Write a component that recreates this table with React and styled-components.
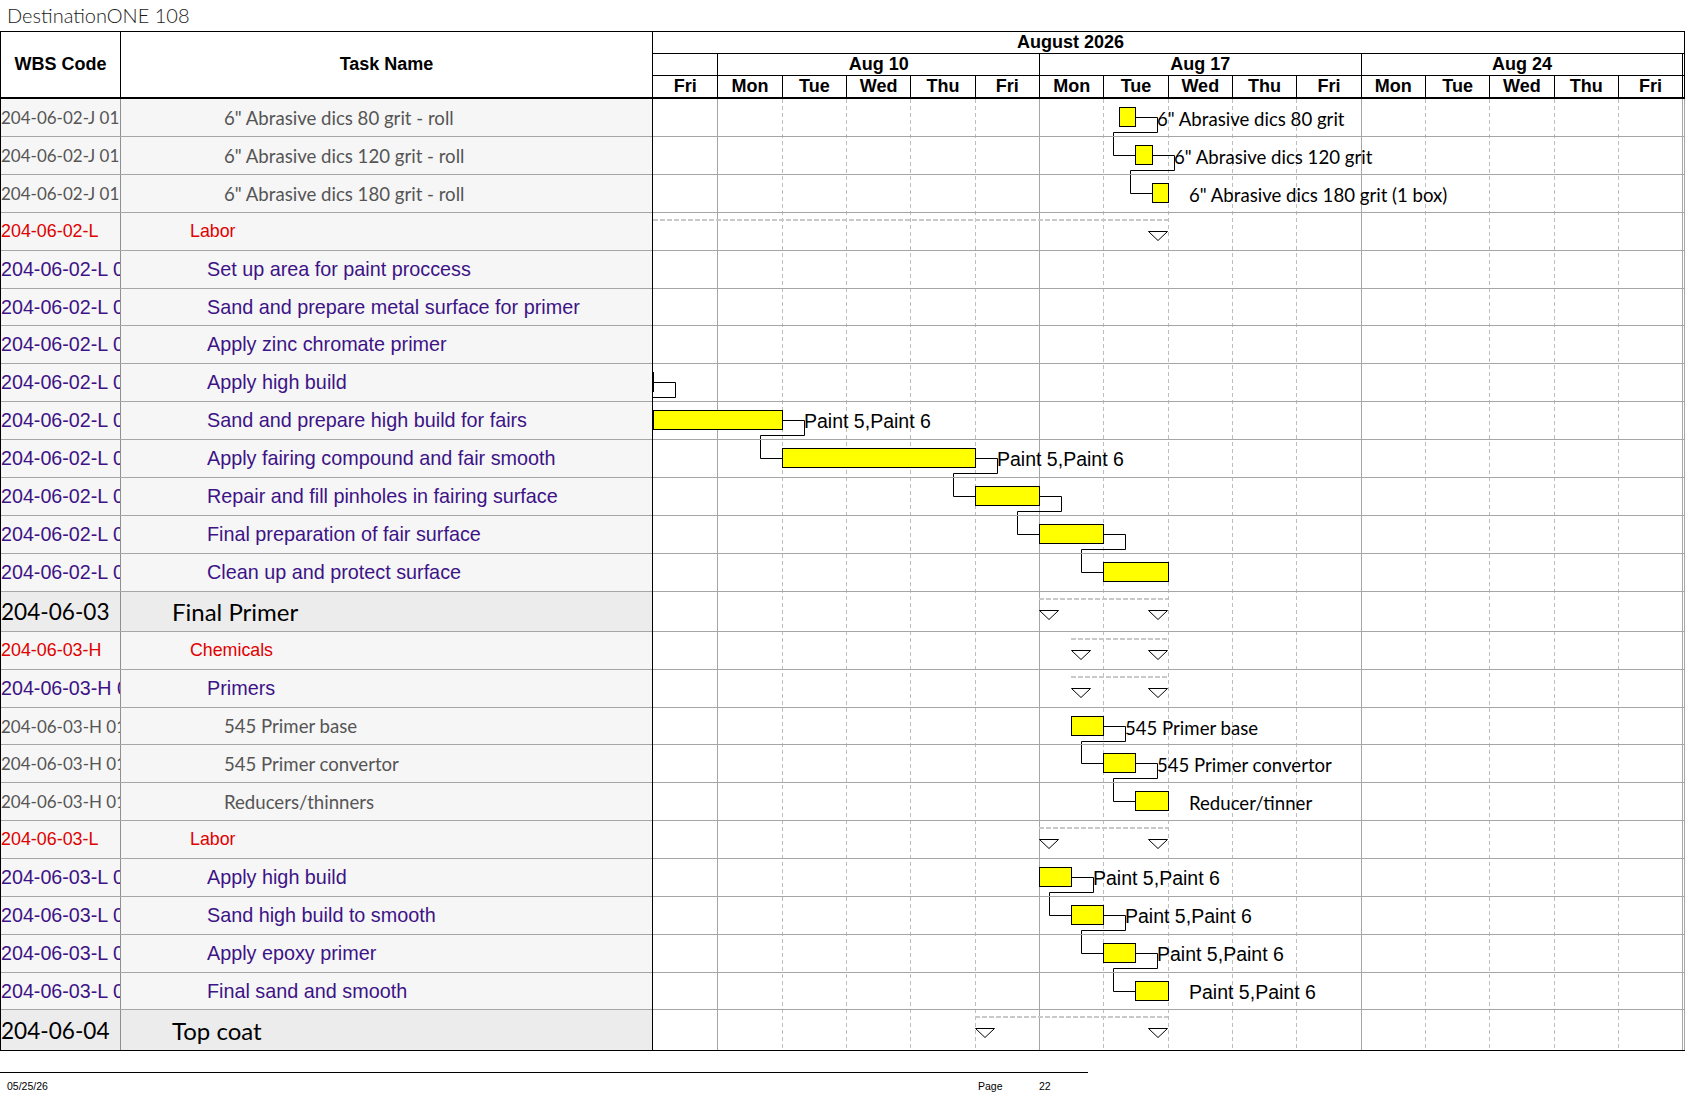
import React from 'react';
import styled, { createGlobalStyle } from 'styled-components';

const DAY = 64.33;
const NDAYS = 16;
const ARIAL = '"Liberation Sans", Arial, Helvetica, sans-serif';
const HUMAN = 'Lato, "Open Sans", "Noto Sans", sans-serif';

const GlobalStyle = createGlobalStyle`
  html, body { margin: 0; padding: 0; background: #ffffff; }
  body { font-family: ${ARIAL}; color: #000; }
  * { box-sizing: border-box; }
`;

const KINDS = {
  item: { color: '#555555', wbsFont: HUMAN, wbsSize: 17, nameFont: HUMAN, nameSize: 18.6, indent: 103, bg: '#f6f6f6', labelFont: HUMAN, labelSize: 18.6, labelTop: 9.5 },
  group: { color: '#e00000', wbsFont: ARIAL, wbsSize: 17.9, nameFont: ARIAL, nameSize: 17.8, indent: 69, bg: '#f6f6f6' },
  task: { color: '#3d1386', wbsFont: ARIAL, wbsSize: 19.7, nameFont: ARIAL, nameSize: 19.8, indent: 86, bg: '#f6f6f6', labelFont: ARIAL, labelSize: 19.5, labelTop: 8.5 },
  phase: { color: '#000000', wbsFont: HUMAN, wbsSize: 22.6, nameFont: HUMAN, nameSize: 24, indent: 51, bg: '#ececec' },
};

const P = 'Paint 5,Paint 6';
const ROWS = [
  { wbs: '204-06-02-J 01', name: '6" Abrasive dics 80 grit - roll', kind: 'item', h: 38, bar: [7.25, 7.5], label: '6" Abrasive dics 80 grit', link: true },
  { wbs: '204-06-02-J 01', name: '6" Abrasive dics 120 grit - roll', kind: 'item', h: 38, bar: [7.5, 7.75], label: '6" Abrasive dics 120 grit', link: true },
  { wbs: '204-06-02-J 01', name: '6" Abrasive dics 180 grit - roll', kind: 'item', h: 38, bar: [7.75, 8], label: '6" Abrasive dics 180 grit (1 box)' },
  { wbs: '204-06-02-L', name: 'Labor', kind: 'group', h: 38, summary: [-4, 8] },
  { wbs: '204-06-02-L 01', name: 'Set up area for paint proccess', kind: 'task', h: 38 },
  { wbs: '204-06-02-L 02', name: 'Sand and prepare metal surface for primer', kind: 'task', h: 37 },
  { wbs: '204-06-02-L 03', name: 'Apply zinc chromate primer', kind: 'task', h: 38 },
  { wbs: '204-06-02-L 04', name: 'Apply high build', kind: 'task', h: 38, bar: [-1, 0], link: true },
  { wbs: '204-06-02-L 05', name: 'Sand and prepare high build for fairs', kind: 'task', h: 38, bar: [0, 2], label: P, link: true },
  { wbs: '204-06-02-L 06', name: 'Apply fairing compound and fair smooth', kind: 'task', h: 38, bar: [2, 5], label: P, link: true },
  { wbs: '204-06-02-L 07', name: 'Repair and fill pinholes in fairing surface', kind: 'task', h: 38, bar: [5, 6], link: true },
  { wbs: '204-06-02-L 08', name: 'Final preparation of fair surface', kind: 'task', h: 38, bar: [6, 7], link: true },
  { wbs: '204-06-02-L 09', name: 'Clean up and protect surface', kind: 'task', h: 38, bar: [7, 8] },
  { wbs: '204-06-03', name: 'Final Primer', kind: 'phase', h: 40, summary: [6, 8] },
  { wbs: '204-06-03-H', name: 'Chemicals', kind: 'group', h: 38, summary: [6.5, 8] },
  { wbs: '204-06-03-H 01', name: 'Primers', kind: 'task', h: 38, summary: [6.5, 8] },
  { wbs: '204-06-03-H 01', name: '545 Primer base', kind: 'item', h: 37, bar: [6.5, 7], label: '545 Primer base', link: true },
  { wbs: '204-06-03-H 01', name: '545 Primer convertor', kind: 'item', h: 38, bar: [7, 7.5], label: '545 Primer convertor', link: true },
  { wbs: '204-06-03-H 01', name: 'Reducers/thinners', kind: 'item', h: 38, bar: [7.5, 8], label: 'Reducer/tinner' },
  { wbs: '204-06-03-L', name: 'Labor', kind: 'group', h: 38, summary: [6, 8] },
  { wbs: '204-06-03-L 01', name: 'Apply high build', kind: 'task', h: 38, bar: [6, 6.5], label: P, link: true },
  { wbs: '204-06-03-L 02', name: 'Sand high build to smooth', kind: 'task', h: 38, bar: [6.5, 7], label: P, link: true },
  { wbs: '204-06-03-L 03', name: 'Apply epoxy primer', kind: 'task', h: 38, bar: [7, 7.5], label: P, link: true },
  { wbs: '204-06-03-L 04', name: 'Final sand and smooth', kind: 'task', h: 37, bar: [7.5, 8], label: P },
  { wbs: '204-06-04', name: 'Top coat', kind: 'phase', h: 40, summary: [5, 8] },
];

const DAY_NAMES = ['Fri', 'Mon', 'Tue', 'Wed', 'Thu', 'Fri', 'Mon', 'Tue', 'Wed', 'Thu', 'Fri', 'Mon', 'Tue', 'Wed', 'Thu', 'Fri'];
const WEEKS = [
  { days: 1, label: '' },
  { days: 5, label: 'Aug 10' },
  { days: 5, label: 'Aug 17' },
  { days: 5, label: 'Aug 24' },
];

/* ---------- page ---------- */
const Page = styled.div`
  width: 1687px;
  height: 1097px;
  overflow: hidden;
  background: #fff;
`;

const Title = styled.div`
  height: 31px;
  padding-left: 7px;
  font-family: ${HUMAN};
  font-weight: 300;
  font-size: 20px;
  line-height: 31px;
  color: #1a1a1a;
  white-space: nowrap;
`;

const Sheet = styled.div`
  width: 1685px;
  border-top: 1px solid #000;
  border-left: 1px solid #000;
`;

/* ---------- header ---------- */
const HeaderBar = styled.div`
  display: flex;
  height: 67px;
  border-bottom: 2px solid #000;
`;

const HeaderLeft = styled.div`
  display: flex;
  width: 652px;
  border-right: 1px solid #000;
`;

const HeaderCell = styled.div`
  width: ${(p) => p.$w}px;
  flex: ${(p) => (p.$grow ? 1 : 'none')};
  display: flex;
  align-items: center;
  justify-content: center;
  border-right: ${(p) => (p.$divider ? '1px solid #000' : 'none')};
  font-family: ${ARIAL};
  font-weight: 700;
  font-size: 18px;
`;

const GanttHeader = styled.div`
  width: 1032px;
  display: flex;
  flex-direction: column;
  border-right: 1px solid #000;
`;

const MonthRow = styled.div`
  height: 22px;
  border-bottom: 1px solid #000;
  padding-left: 364px;
  font-weight: 700;
  font-size: 18px;
  line-height: 21px;
  white-space: nowrap;
`;

const WeekRow = styled.div`
  display: flex;
  height: 23px;
  border-bottom: 1px solid #000;
`;

const DayRow = styled.div`
  display: flex;
  flex: 1;
`;

const ScaleCell = styled.div`
  width: ${(p) => (p.$days ? `${p.$days * DAY}px` : 'auto')};
  flex: ${(p) => (p.$days ? 'none' : 1)};
  border-left: ${(p) => (p.$line ? '1px solid #000' : 'none')};
  display: flex;
  align-items: center;
  justify-content: center;
  font-weight: 700;
  font-size: 18px;
  white-space: nowrap;
`;

/* ---------- body ---------- */
const Body = styled.div`
  display: flex;
  border-bottom: 1px solid #000;
`;

const LeftPanel = styled.div`
  width: 652px;
  display: flex;
  flex-direction: column;
  border-right: 1px solid #000;
`;

const LeftRow = styled.div`
  display: flex;
  height: ${(p) => p.$h}px;
  border-bottom: ${(p) => (p.$last ? 'none' : '1px solid #a6a6a6')};
  background: ${(p) => KINDS[p.$kind].bg};
  color: ${(p) => KINDS[p.$kind].color};
`;

const WbsCell = styled.div`
  width: 120px;
  flex: none;
  display: flex;
  align-items: center;
  overflow: hidden;
  white-space: pre;
  border-right: 1px solid #8f8f8f;
  font-family: ${(p) => KINDS[p.$kind].wbsFont};
  font-size: ${(p) => KINDS[p.$kind].wbsSize}px;
`;

const NameCell = styled.div`
  flex: 1;
  display: flex;
  align-items: center;
  overflow: hidden;
  white-space: nowrap;
  padding-left: ${(p) => KINDS[p.$kind].indent}px;
  font-family: ${(p) => KINDS[p.$kind].nameFont};
  font-size: ${(p) => KINDS[p.$kind].nameSize}px;
`;

const GanttPanel = styled.div`
  width: 1032px;
  display: grid;
  overflow: hidden;
  border-right: 1px solid #a6a6a6;
  background: #fff;
`;

const GridLayer = styled.div`
  grid-area: 1 / 1;
  display: flex;
`;

const dashed = 'repeating-linear-gradient(to bottom, #bdbdbd 0 4px, transparent 4px 7px)';
const solid = 'linear-gradient(#a6a6a6, #a6a6a6)';

const GridCol = styled.div`
  width: ${(p) => (p.$filler ? 'auto' : `${DAY}px`)};
  flex: ${(p) => (p.$filler ? 1 : 'none')};
  background-image: ${(p) => (p.$line === 'solid' ? solid : p.$line === 'dashed' ? dashed : 'none')};
  background-size: 1px 100%;
  background-repeat: no-repeat;
  background-position: left top;
`;

const RowsLayer = styled.div`
  grid-area: 1 / 1;
  display: flex;
  flex-direction: column;
`;

const GanttRow = styled.div`
  position: relative;
  height: ${(p) => p.$h}px;
  border-bottom: ${(p) => (p.$last ? 'none' : '1px solid #a6a6a6')};
`;

const LinkLayer = styled.svg`
  grid-area: 1 / 1;
  display: block;
  pointer-events: none;
`;

const Bar = styled.div`
  position: absolute;
  top: 8px;
  height: 20px;
  border: 1px solid #000;
  background: #ffff00;
`;

const BarLabel = styled.div`
  position: absolute;
  top: ${(p) => KINDS[p.$kind].labelTop}px;
  height: 20px;
  line-height: 20px;
  white-space: nowrap;
  color: #000;
  font-family: ${(p) => KINDS[p.$kind].labelFont};
  font-size: ${(p) => KINDS[p.$kind].labelSize}px;
`;

const SummaryLine = styled.div`
  position: absolute;
  top: 6px;
  height: 2px;
  background-image: repeating-linear-gradient(to right, #c9c9c9 0 5px, transparent 5px 7px);
`;

const Marker = styled.svg`
  position: absolute;
  top: 18px;
  width: 20px;
  height: 10px;
  display: block;
`;

/* ---------- footer ---------- */
const Footer = styled.div`
  width: 1088px;
  margin-top: 21px;
  border-top: 1px solid #000;
  padding: 7px 0 0 7px;
  display: grid;
  grid-template-columns: 971px 61px auto;
  font-family: ${ARIAL};
  font-size: 10.5px;
  line-height: 12px;
  color: #000;
`;

function Triangle({ left }) {
  return (
    <Marker style={{ left }} viewBox="0 0 20 10">
      <polygon points="0.5,0.5 19.5,0.5 10,9.5" fill="#fff" stroke="#000" strokeWidth="1" />
    </Marker>
  );
}

function GanttCells({ row }) {
  const k = row.kind;
  const items = [];
  if (row.summary) {
    const [s, e] = row.summary;
    const sx = Math.max(s, 0) * DAY;
    items.push(<SummaryLine key="sl" style={{ left: sx, width: e * DAY - sx }} />);
    if (s >= 0) items.push(<Triangle key="tl" left={Math.round(s * DAY)} />);
    items.push(<Triangle key="tr" left={Math.round(e * DAY) - 20} />);
  }
  if (row.bar) {
    const [s, e] = row.bar;
    const l = Math.round(s * DAY);
    const r = Math.round(e * DAY);
    items.push(<Bar key="b" style={{ left: l, width: r - l + 1 }} />);
    if (row.label) {
      items.push(
        <BarLabel key="lb" $kind={k} style={{ left: r + (row.link ? 22 : 21) }}>
          {row.label}
        </BarLabel>
      );
    }
  }
  return items;
}

export default function App() {
  const tops = [];
  let acc = 0;
  ROWS.forEach((r) => {
    tops.push(acc);
    acc += r.h;
  });
  const total = acc;

  const links = [];
  ROWS.forEach((r, i) => {
    if (!r.link) return;
    const n = ROWS[i + 1];
    const e = Math.round(r.bar[1] * DAY) + 1;
    const s2 = Math.round(n.bar[0] * DAY);
    const c = tops[i] + 18.5;
    const yd = tops[i] + 33.5;
    const x1 = e + 21.5;
    const xl = s2 - 21.5;
    const c2 = tops[i + 1] + 18.5;
    links.push(`M${e} ${c} H${x1} V${yd} H${xl} V${c2} H${s2}`);
  });

  const gridCols = [];
  for (let i = 0; i <= NDAYS; i++) {
    const line = i === 0 ? 'none' : i % 5 === 1 ? 'solid' : 'dashed';
    gridCols.push(<GridCol key={i} $line={line} $filler={i === NDAYS} />);
  }

  return (
    <Page>
      <GlobalStyle />
      <Title>DestinationONE 108</Title>
      <Sheet>
        <HeaderBar>
          <HeaderLeft>
            <HeaderCell $w={120} $divider>WBS Code</HeaderCell>
            <HeaderCell $grow>Task Name</HeaderCell>
          </HeaderLeft>
          <GanttHeader>
            <MonthRow>August 2026</MonthRow>
            <WeekRow>
              {WEEKS.map((w, i) => (
                <ScaleCell key={i} $days={w.days} $line={i > 0}>
                  {w.label}
                </ScaleCell>
              ))}
              <ScaleCell $line />
            </WeekRow>
            <DayRow>
              {DAY_NAMES.map((d, i) => (
                <ScaleCell key={i} $days={1} $line={i > 0}>
                  {d}
                </ScaleCell>
              ))}
              <ScaleCell $line />
            </DayRow>
          </GanttHeader>
        </HeaderBar>

        <Body>
          <LeftPanel>
            {ROWS.map((r, i) => (
              <LeftRow key={i} $h={r.h} $kind={r.kind} $last={i === ROWS.length - 1}>
                <WbsCell $kind={r.kind}>{r.wbs}</WbsCell>
                <NameCell $kind={r.kind}>{r.name}</NameCell>
              </LeftRow>
            ))}
          </LeftPanel>
          <GanttPanel>
            <GridLayer>{gridCols}</GridLayer>
            <RowsLayer>
              {ROWS.map((r, i) => (
                <GanttRow key={i} $h={r.h} $last={i === ROWS.length - 1}>
                  <GanttCells row={r} />
                </GanttRow>
              ))}
            </RowsLayer>
            <LinkLayer width="1031" height={total} viewBox={`0 0 1031 ${total}`}>
              {links.map((d, i) => (
                <path key={i} d={d} fill="none" stroke="#000" strokeWidth="1" />
              ))}
            </LinkLayer>
          </GanttPanel>
        </Body>
      </Sheet>

      <Footer>
        <span>05/25/26</span>
        <span>Page</span>
        <span>22</span>
      </Footer>
    </Page>
  );
}
